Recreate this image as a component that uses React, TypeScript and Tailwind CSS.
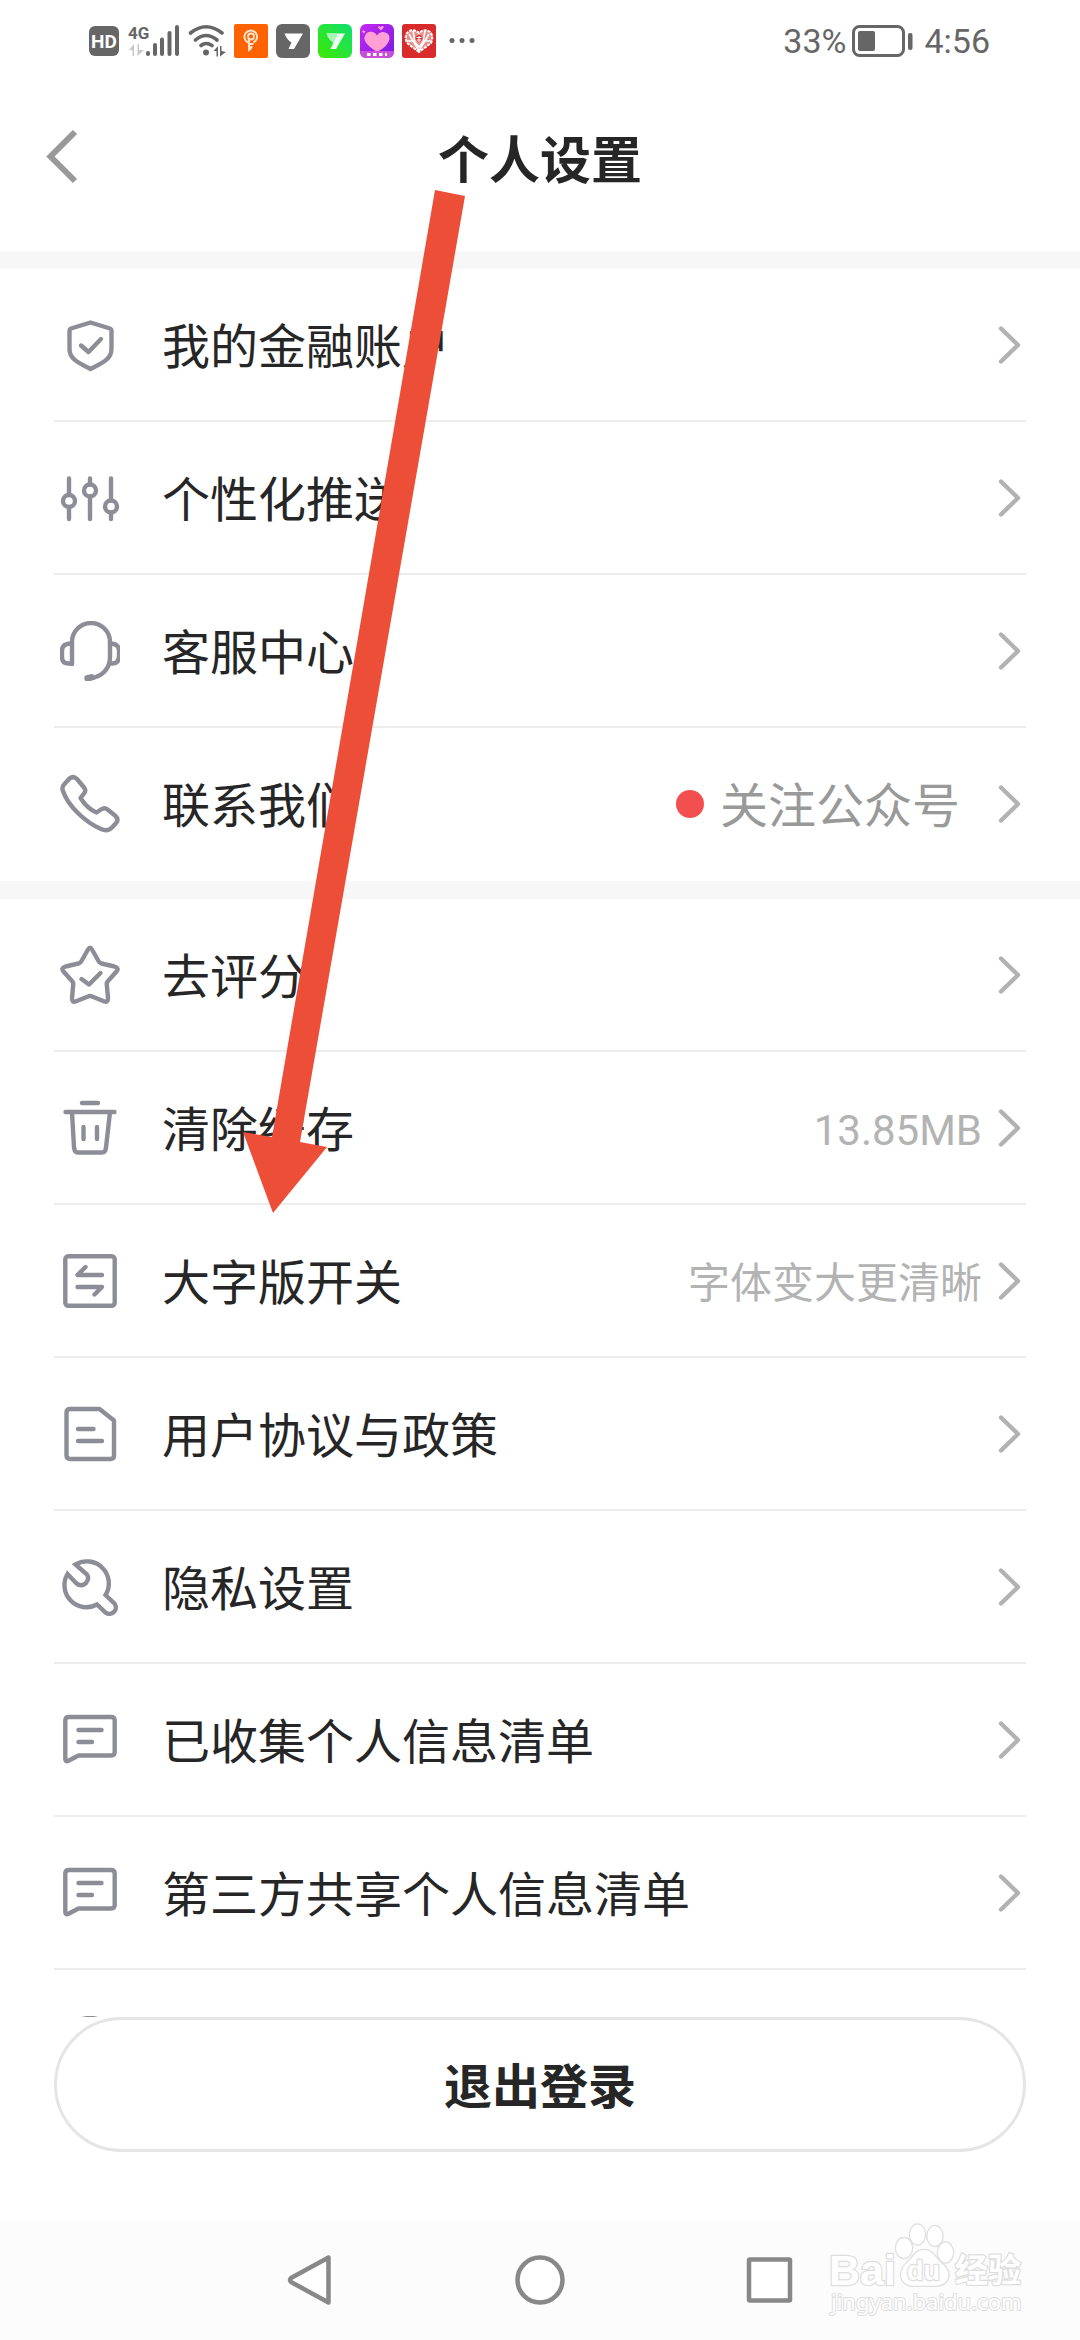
import type { ReactNode } from "react";

type Item = {
  label: string;
  icon: ReactNode;
  extra?: ReactNode;
};

function Icon({ children }: { children: ReactNode }) {
  return (
    <svg
      width="60"
      height="60"
      viewBox="0 0 60 60"
      fill="none"
      stroke="#8d8d98"
      strokeWidth="4.4"
      strokeLinecap="round"
      strokeLinejoin="round"
      className="shrink-0"
      aria-hidden="true"
    >
      {children}
    </svg>
  );
}

const shieldIcon = (
  <Icon>
    <path d="M30.5 7.5L50 13.5Q51.5 14 51.5 16V34C51.5 44 43 47.5 30.5 54C18 47.5 9.5 44 9.5 34V16Q9.5 14 11 13.5Z" />
    <path d="M21 30.5L28.5 37L41 24" />
  </Icon>
);

const slidersIcon = (
  <Icon>
    <path d="M9 10.5V27M9 39V51M30 10.5V16.5M30 28.5V51M51 10.5V32.5M51 44.5V51" />
    <circle cx="9" cy="33" r="6" />
    <circle cx="30" cy="22.5" r="6" />
    <circle cx="51" cy="38.5" r="6" />
  </Icon>
);

const headsetIcon = (
  <Icon>
    <path d="M12 43V21A19 19 0 0 1 50 21V36C50 48 42 56 29 57.5" />
    <path d="M12 22.5H10Q2 23 2 30V36Q2 42.5 8.5 42.5H12" />
    <path d="M50 22.5H51Q59 23 59 30V35Q59 42.5 52 42.5H50" />
    <path d="M27.5 57.2L31.5 56.4" strokeWidth="6.5" />
  </Icon>
);

const phoneIcon = (
  <Icon>
    <path d="M9.5 4.5Q13.5 1.5 17 5L24 13.5Q26.5 16.5 24 19.5L20.5 24C25 31 30 36 36.5 38.5L41 35.5Q44.5 33 47.5 35.5L55 41.5Q59 45 56.5 48.5L52 53.5Q47.5 58 41 55C25 48 8 32 3 17Q1.5 13 4 10.5Z" />
  </Icon>
);

const starIcon = (
  <Icon>
    <path d="M28 4.5Q30 1 32 4.5L38.5 16Q39.5 18 41.5 18.5L54.5 21.5Q59.5 23 56.5 26.5L48 36Q46.5 37.5 46.8 39.5L48 53Q48 57.5 44.5 56.5L32 51.5Q30 50.5 28 51.5L15.5 56.5Q12 57.5 12 53L13.2 39.5Q13.5 37.5 12 36L3.5 26.5Q0.5 23 5.5 21.5L18.5 18.5Q20.5 18 21.5 16Z" />
    <path d="M21.5 34L29 39.5L40.5 28" />
  </Icon>
);

const trashIcon = (
  <Icon>
    <path d="M22 5H38M5.5 14H54.5M12 14L14 49.5Q14.5 54.5 18 54.5H42Q45.5 54.5 46 49.5L50 14M23.5 29V41M37 29V41" />
  </Icon>
);

const switchIcon = (
  <Icon>
    <rect x="5.3" y="5.3" width="49.4" height="49.4" rx="3" />
    <path d="M25.5 16L17.5 24H42M17.5 36H42L34.5 43.5" />
  </Icon>
);

const documentIcon = (
  <Icon>
    <path d="M10.5 5H39.5L54 16.5V51.5Q54 55 50.5 55H10.5Q6.5 55 6.5 51.5V8.5Q6.5 5 10.5 5Z" />
    <path d="M18 25H33.5M18 37H42" />
  </Icon>
);

const wrenchIcon = (
  <Icon>
    <path
      strokeLinejoin="miter"
      d="M7.5 17L16 26Q21 30.5 26 26Q30 21 26.5 17L15.5 7.5A22 22 0 0 1 45.5 38L53.5 45.5A6.3 6.3 0 0 1 45.5 55.5L37 47.5A22 22 0 0 1 7.5 17Z"
    />
  </Icon>
);

const messageIcon = (
  <Icon>
    <path d="M9 7H51Q54.7 7 54.7 10.5V42Q54.7 45.5 51 45.5H18.5L8 51Q5.3 52 5.3 49V10.5Q5.3 7 9 7Z" />
    <path d="M18.5 20H41.5M18.5 32H32" />
  </Icon>
);

const infoIcon = (
  <Icon>
    <circle cx="30" cy="29" r="27" />
  </Icon>
);

const accountItems: Item[] = [
  { label: "我的金融账户", icon: shieldIcon },
  { label: "个性化推送", icon: slidersIcon },
  { label: "客服中心", icon: headsetIcon },
  {
    label: "联系我们",
    icon: phoneIcon,
    extra: (
      <span className="flex items-center gap-4 pr-[22px] text-5xl text-[#999999]">
        <span className="size-7 rounded-full bg-[#f25050]" />
        <span className="pt-1.5">关注公众号</span>
      </span>
    ),
  },
];

const appItems: Item[] = [
  { label: "去评分", icon: starIcon },
  {
    label: "清除缓存",
    icon: trashIcon,
    extra: <span className="pt-1.5 text-[42px] text-[#b3b3b3]">13.85MB</span>,
  },
  {
    label: "大字版开关",
    icon: switchIcon,
    extra: <span className="pt-1.5 text-[42px] text-[#b3b3b3]">字体变大更清晰</span>,
  },
  { label: "用户协议与政策", icon: documentIcon },
  { label: "隐私设置", icon: wrenchIcon },
  { label: "已收集个人信息清单", icon: messageIcon },
  { label: "第三方共享个人信息清单", icon: messageIcon },
];

function SettingsRow({ label, icon, extra }: Item) {
  return (
    <li className="h-[153px] border-b-2 border-[#ededed] last:border-transparent">
      <button type="button" className="flex h-full w-full items-center pl-1.5 pr-1 text-left">
        {icon}
        <span className="ml-[42px] flex-1 pt-1.5 text-5xl text-[#262626]">{label}</span>
        {extra}
        <svg
          width="24"
          height="40"
          viewBox="0 0 24 40"
          fill="none"
          stroke="#b2b2b2"
          strokeWidth="4.4"
          strokeLinecap="round"
          strokeLinejoin="round"
          className="ml-4 shrink-0"
          aria-hidden="true"
        >
          <path d="M3 3.5L20 20L3 36.5" />
        </svg>
      </button>
    </li>
  );
}

function StatusBar() {
  return (
    <div className="flex h-[82px] shrink-0 items-center justify-between pl-[88px] pr-[90px]">
      <div className="flex items-center gap-2">
        <svg width="32" height="34" viewBox="0 0 32 34" aria-label="HD">
          <rect x="1" y="2" width="30" height="30" rx="6" fill="#666666" />
          <text x="16" y="24" textAnchor="middle" fontSize="19" fontWeight="700" fill="#fff" fontFamily="Roboto, sans-serif">
            HD
          </text>
        </svg>
        <svg width="52" height="34" viewBox="0 0 52 34" aria-label="4G">
          <text x="0" y="15" fontSize="17" fontWeight="700" fill="#666666" fontFamily="Roboto, sans-serif">
            4G
          </text>
          <path d="M1 26L6 20V32H4.5V26ZM16 26L9.5 32V20H11V26Z" fill="#c9c9c9" />
          <path
            d="M20 29V30M27 21V30M34 15.5V30M41.5 9V30M49 3V30"
            stroke="#666666"
            strokeWidth="4"
            strokeLinecap="round"
          />
        </svg>
        <svg width="38" height="34" viewBox="0 0 38 34" fill="none" stroke="#666666" strokeWidth="3.6" strokeLinecap="round">
          <path d="M2.5 9Q18 -3.500 34 9M7.5 16Q18 7 29 16M13 21.5Q18 17.5 24 21.5" />
          <circle cx="18" cy="28.5" r="3" fill="#666666" stroke="none" />
          <path d="M25.5 27L30 22V32.5H28.5V27ZM38 28L32 32.5V22H33.5V27Z" fill="#666666" stroke="none" />
        </svg>
        <svg width="34" height="34" viewBox="0 0 34 34" fill="none" stroke="#ffe3cc">
          <rect width="34" height="34" rx="2" fill="#ff6200" stroke="none" />
          <path d="M14 18.5A6.3 6.3 0 1 1 19.5 18.5" strokeWidth="2" />
          <circle cx="17" cy="12.5" r="3" strokeWidth="1.8" />
          <path d="M15 15V26L17.5 24M15 20H19.5M15 23H18.5" strokeWidth="2" />
        </svg>
        <svg width="34" height="34" viewBox="0 0 34 34">
          <rect width="34" height="34" rx="6" fill="#666666" />
          <path d="M8.5 9.5H27L18 25H12.5L15.5 18.5Q11 16 8.5 9.5Z" fill="#fff" />
        </svg>
        <svg width="34" height="34" viewBox="0 0 34 34">
          <defs>
            <linearGradient id="green" x1="0" x2="1" y1="1" y2="0">
              <stop offset="0" stopColor="#3ee800" />
              <stop offset="1" stopColor="#0fe070" />
            </linearGradient>
          </defs>
          <rect width="34" height="34" rx="6" fill="url(#green)" />
          <path d="M8.5 9.5H27L18 25H12.5L15.5 18.5Q11 16 8.5 9.5Z" fill="#eafff0" />
          <path d="M8.5 9.5H20L15.5 18.5Q11 16 8.5 9.5Z" fill="#a8f5b4" />
        </svg>
        <svg width="34" height="34" viewBox="0 0 34 34">
          <defs>
            <linearGradient id="purple" x1="0" x2="1" y1="0" y2="1">
              <stop offset="0" stopColor="#c42af0" />
              <stop offset="1" stopColor="#7a18e0" />
            </linearGradient>
          </defs>
          <rect width="34" height="34" rx="6" fill="url(#purple)" />
          <path d="M17 28Q3 19 4.5 13Q6.5 6.5 13 8Q16 9 17 11.5Q19 8 23 8Q30 8.5 29.5 15Q28.5 22 17 28Z" fill="#ff9fd6" />
          <path d="M21 6.5L18 3.5Q18.5 1.5 20.5 3Q22.5 1 24 3ZM4 9.5L2 7.5Q3 5.5 5.5 7.5Z" fill="#ff9fd6" />
          <path d="M0 27H34V28A6 6 0 0 1 28 34H6A6 6 0 0 1 0 28Z" fill="#c94fd8" />
          <path d="M7 30.5H27" stroke="#fff" strokeWidth="3" strokeDasharray="3.5 2.5" />
        </svg>
        <svg width="34" height="34" viewBox="0 0 34 34">
          <rect width="34" height="34" rx="3" fill="#d92b2b" />
          <path
            d="M17 28L5 19Q2 12 6 8Q11 4 17 9Q23 4 28 8Q32 12 29 19Z"
            fill="#e8908c"
            stroke="#fff"
            strokeWidth="2"
            strokeDasharray="3 1"
          />
          <path d="M7 10L17 27L27 10M5 17H12L17 23L22 17H29M11 7L13 18M23 7L21 18M14 14H20M14 17H20" fill="none" stroke="#fff" strokeWidth="1.6" />
          <circle cx="17" cy="14.5" r="3.5" fill="#d92b2b" />
          <path d="M14.5 13.5H19.5M14.5 16H19.5M17 12V18" stroke="#fff" strokeWidth="1" />
        </svg>
        <svg width="36" height="34" viewBox="0 0 36 34" fill="#666666">
          <circle cx="8" cy="16.5" r="2.5" />
          <circle cx="18" cy="16.5" r="2.5" />
          <circle cx="28" cy="16.5" r="2.5" />
        </svg>
      </div>
      <div className="flex items-center text-[34px] leading-none text-[#666666]">
        <span>33%</span>
        <svg width="62" height="34" viewBox="0 0 62 34" className="mx-1.5" aria-hidden="true">
          <rect x="1.5" y="2.5" width="50" height="29" rx="6" fill="none" stroke="#666666" strokeWidth="3" />
          <rect x="6" y="7" width="17" height="20" rx="2" fill="#666666" />
          <rect x="56" y="9" width="4.5" height="17" rx="2" fill="#666666" />
        </svg>
        <span className="ml-1">4:56</span>
      </div>
    </div>
  );
}

function Watermark() {
  return (
    <svg
      width="210"
      height="110"
      viewBox="0 0 210 110"
      className="pointer-events-none absolute bottom-3.5 right-12"
      fill="#ffffff"
      stroke="#dedede"
      strokeWidth="2.5"
      paintOrder="stroke"
      strokeLinejoin="round"
    >
      <text x="7" y="69" fontSize="43" fontWeight="700" fontFamily="'Liberation Sans', sans-serif">
        Bai
      </text>
      <ellipse cx="82" cy="32" rx="8" ry="10" />
      <ellipse cx="95.5" cy="18.5" rx="7.5" ry="10" />
      <ellipse cx="113" cy="20" rx="7.5" ry="10" />
      <ellipse cx="123.5" cy="36.5" rx="7.5" ry="10" />
      <path d="M102 34C94 34 92 40 87 45C80 51 78 56 79.5 62C82 71 92 70 102 69.5C112 70 123 71 126 62C128 55 124 51 117 45C112 40 110 34 102 34Z" />
      <text x="85" y="64" fontSize="27" fontWeight="700" fontFamily="'Liberation Sans', sans-serif">
        du
      </text>
      <text x="133" y="66" fontSize="33" fontWeight="700" fontFamily="'Noto Sans CJK SC', sans-serif">
        经验
      </text>
      <text x="9" y="94" fontSize="22" strokeWidth="2" fontFamily="'Noto Sans', sans-serif">
        jingyan.baidu.com
      </text>
    </svg>
  );
}

export default function App() {
  return (
    <div className="relative flex h-screen flex-col overflow-hidden bg-white font-[Roboto,'Noto_Sans_CJK_SC',sans-serif]">
      <StatusBar />

      <header className="mb-[15px] grid h-[154px] shrink-0 grid-cols-[1fr_auto_1fr] items-center px-11">
        <button type="button" aria-label="返回" className="justify-self-start">
          <svg width="36" height="58" viewBox="0 0 36 58" fill="none" stroke="#999999" strokeWidth="6">
            <path d="M31 2L6.5 26.5L31 51" />
          </svg>
        </button>
        <h1 className="pt-1.5 text-[51px] font-bold text-[#262626]">个人设置</h1>
      </header>

      <main className="min-h-0 flex-1 overflow-hidden">
        <ul className="border-t-[18px] border-[#f7f7f7] px-[54px]">
          {accountItems.map((item) => (
            <SettingsRow key={item.label} {...item} />
          ))}
        </ul>
        <ul className="border-t-[18px] border-[#f7f7f7] px-[54px]">
          {appItems.map((item) => (
            <SettingsRow key={item.label} {...item} />
          ))}
          <SettingsRow label="" icon={infoIcon} />
        </ul>
      </main>

      <footer className="shrink-0 px-[54px] pb-[68px]">
        <button
          type="button"
          className="h-[135px] w-full rounded-full border-3 border-[#e5e5e5] pt-1.5 text-5xl font-bold text-[#262626]"
        >
          退出登录
        </button>
      </footer>

      <nav className="relative flex h-[120px] shrink-0 items-center justify-center gap-[180px] bg-[#fcfcfc]">
        <button type="button" aria-label="后退">
          <svg width="50" height="50" viewBox="0 0 50 50" fill="#fff" stroke="#888888" strokeWidth="4.5" strokeLinejoin="round">
            <path d="M43.5 2.5V47.5L6 27Q4 25 6 23Z" />
          </svg>
        </button>
        <button type="button" aria-label="主页">
          <svg width="50" height="50" viewBox="0 0 50 50" fill="#fff" stroke="#888888" strokeWidth="4.5">
            <circle cx="25" cy="25" r="22.5" />
          </svg>
        </button>
        <button type="button" aria-label="最近任务">
          <svg width="50" height="50" viewBox="0 0 50 50" fill="#fff" stroke="#888888" strokeWidth="4.5" strokeLinejoin="round">
            <rect x="4" y="4.5" width="41" height="41" rx="1" />
          </svg>
        </button>
        <Watermark />
      </nav>

      {/* pointer from the page title to the large-text switch */}
      <svg
        width="222"
        height="1023"
        viewBox="0 0 222 1023"
        className="pointer-events-none absolute left-[243px] top-[190px]"
        aria-hidden="true"
      >
        <path d="M192 0L222 6L57 952L84 957L30 1023L0 942L29 947Z" fill="#ec4e38" />
      </svg>
    </div>
  );
}
